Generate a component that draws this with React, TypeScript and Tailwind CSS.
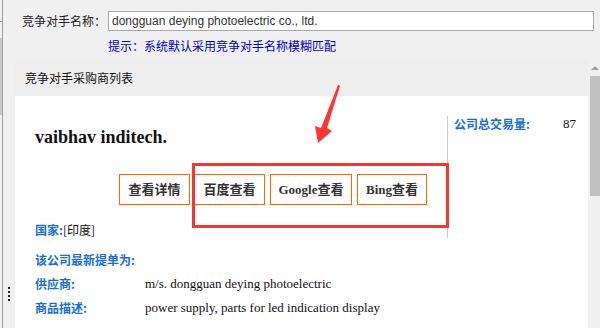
import React from "react";

const cjk = { fontFamily: '"Noto Sans CJK SC", "Noto Sans", sans-serif' };
const serif = { fontFamily: '"Liberation Serif", "Noto Sans CJK SC", serif' };

function Btn({ children, w, ml }: { children: React.ReactNode; w: string; ml: string }) {
  return (
    <div
      className={`h-[31px] ${w} ${ml} border border-[#ff6a00] flex items-center justify-center text-[13px] font-bold text-[#333] whitespace-nowrap`}
      style={serif}
    >
      {children}
    </div>
  );
}

export default function App() {
  return (
    <div className="w-[600px] h-[328px] bg-[#f0f0f0] flex overflow-hidden relative" style={cjk}>
      {/* left strip */}
      <div className="w-[15px] h-full relative shrink-0">
        <div className="absolute left-0 top-[38px] w-[2px] h-[77px] bg-[#c8c8c8]" />
        <div className="absolute left-[2px] top-0 w-px h-full bg-[#a0a0a0]" />
        <div className="absolute left-0 top-[21px] w-[2px] h-px bg-[#a0a0a0]" />
        <div className="absolute left-[8px] top-[287px] flex flex-col gap-[2px]">
          <div className="w-[2px] h-[2px] bg-[#222]" />
          <div className="w-[2px] h-[2px] bg-[#222]" />
          <div className="w-[2px] h-[2px] bg-[#222]" />
          <div className="w-[2px] h-[2px] bg-[#222]" />
        </div>
      </div>

      <div className="flex-1 flex flex-col min-w-0">
        <div className="flex items-center pt-[11px] pl-[7px]">
          <div className="w-[86px] text-[12px] text-[#222] leading-[20px]">竞争对手名称：</div>
          <div className="w-[486px] h-[20px] bg-white border border-[#a9a9a9] flex items-center pl-[3px]">
            <span className="text-[12px] text-[#333]" style={{ fontFamily: '"Liberation Sans", sans-serif' }}>
              dongguan deying photoelectric co., ltd.
            </span>
          </div>
        </div>
        <div className="pl-[93px] mt-[7px] text-[12px] leading-[16px] text-[#0000cc]">
          提示：系统默认采用竞争对手名称模糊匹配
        </div>

        <div className="flex mt-[6px] flex-1">
          <div className="w-[573px] flex flex-col">
            <div className="h-[36px] bg-[#eeeeee] flex items-center pl-[10px] text-[12px] text-[#111]">
              竞争对手采购商列表
            </div>
            <div className="flex-1 bg-white">
              <div className="flex">
                <div className="w-[432px] pt-[30px]">
                  <div
                    className="pl-[20px] text-[18px] font-bold text-[#111] leading-[22px]"
                    style={serif}
                  >
                    vaibhav inditech.
                  </div>
                  <div className="flex pl-[104px] mt-[26px]">
                    <Btn w="w-[71px]" ml="ml-0">查看详情</Btn>
                    <Btn w="w-[71px]" ml="ml-[4px]">百度查看</Btn>
                    <Btn w="w-[82px]" ml="ml-[5px]">Google查看</Btn>
                    <Btn w="w-[70px]" ml="ml-[5px]">Bing查看</Btn>
                  </div>
                </div>
                <div className="mt-[20px] h-[122px] border-l border-[#cccccc] pl-[6px] w-[141px] flex">
                  <span className="text-[12px] font-bold text-[#1c6dd0] leading-[16px]">公司总交易量:</span>
                  <span className="ml-[33px] text-[13px] text-[#111] leading-[16px]" style={serif}>87</span>
                </div>
              </div>
              <div className="pl-[20px] -mt-[16px] text-[12px]">
                <div className="leading-[16px]">
                  <span className="font-bold text-[#1c6dd0]">国家:</span>
                  <span className="text-[#111]">[印度]</span>
                </div>
                <div className="mt-[14px] leading-[16px] font-bold text-[#1c6dd0]">该公司最新提单为:</div>
                <div className="mt-[8px] flex leading-[16px]">
                  <span className="w-[110px] font-bold text-[#1c6dd0]">供应商:</span>
                  <span className="text-[13px] text-[#111]" style={serif}>m/s. dongguan deying photoelectric</span>
                </div>
                <div className="mt-[8px] flex leading-[16px]">
                  <span className="w-[110px] font-bold text-[#1c6dd0]">商品描述:</span>
                  <span className="text-[13px] text-[#111]" style={serif}>power supply, parts for led indication display</span>
                </div>
              </div>
            </div>
          </div>
          {/* scrollbar */}
          <div className="ml-[2px] w-[10px] flex flex-col items-center">
            <div className="h-[16px] flex items-center justify-center">
              <div className="w-0 h-0 border-l-[4px] border-r-[4px] border-b-[4px] border-l-transparent border-r-transparent border-b-[#a0a0a0]" />
            </div>
            <div className="w-[10px] h-[120px] bg-[#c1c1c1]" />
          </div>
        </div>
      </div>

      {/* annotations */}
      <div className="absolute left-[192px] top-[163px] w-[257px] h-[65px] border-[3px] border-[#f53636]" />
      <svg className="absolute left-0 top-0" width="600" height="328" viewBox="0 0 600 328">
        <polygon points="339,85 340,86 327,128 332,131 318,143 315,126 321,128 338,85" fill="#ff3535" />
      </svg>
    </div>
  );
}
